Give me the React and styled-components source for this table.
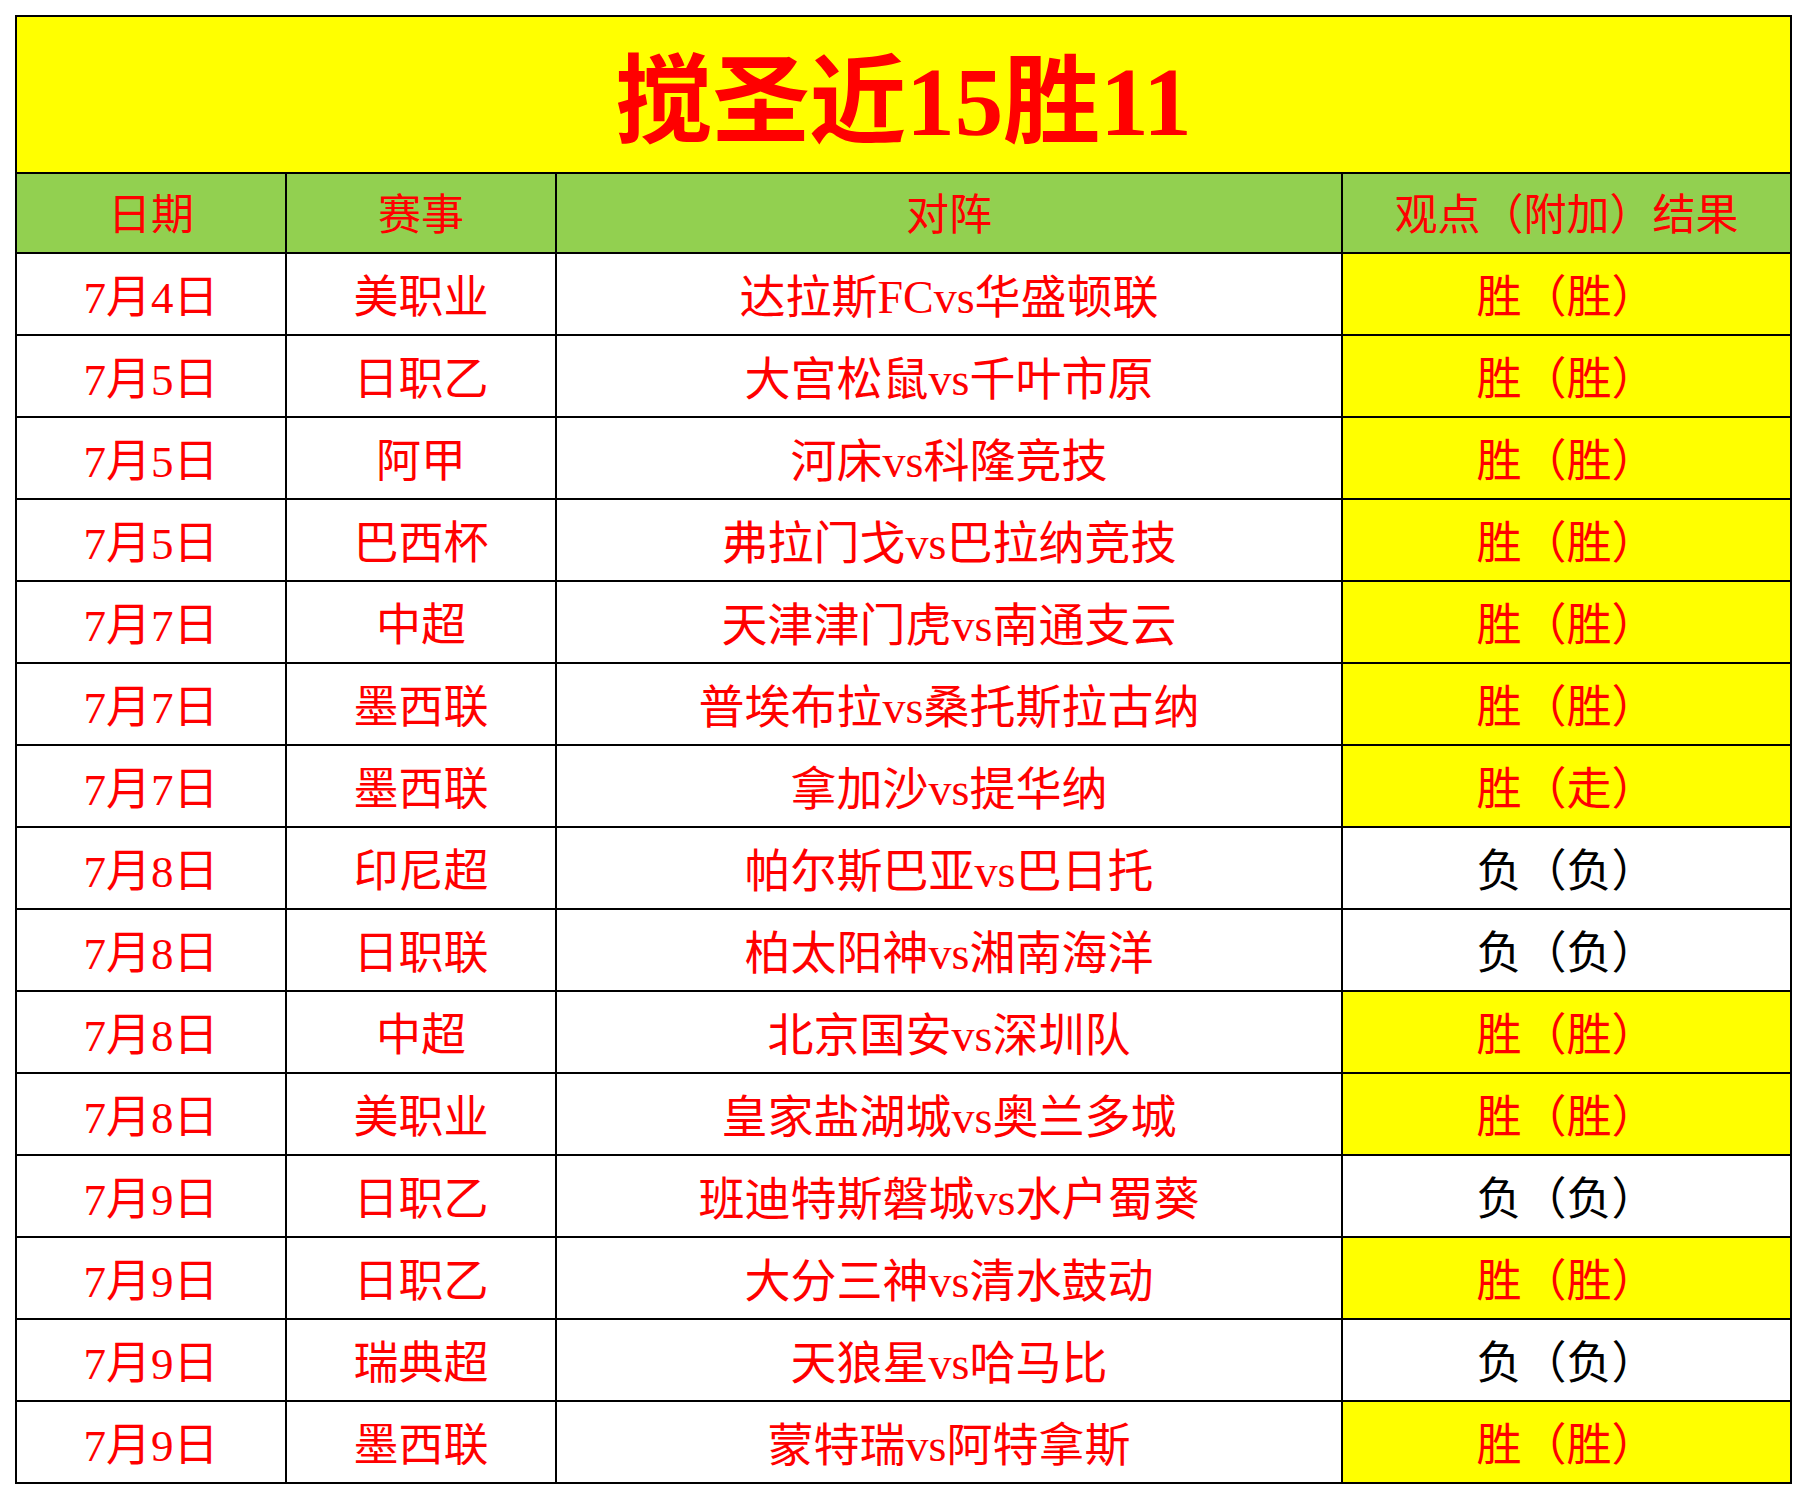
import React from 'react';
import styled, { createGlobalStyle } from 'styled-components';

const GlobalStyle = createGlobalStyle`
    html, body {
        margin: 0;
        padding: 0;
        background: #ffffff;
    }
    body {
        font-family: "Liberation Serif", "Noto Sans CJK SC", serif;
    }
`

const Page = styled.div`
    padding: 15px 0 0 15px;
`

const Table = styled.table`
    width: 1775px;
    table-layout: fixed;
    border-collapse: collapse;
    border: 2px solid #000;

    td {
        border: 2px solid #000;
        text-align: center;
        vertical-align: middle;
        padding: 0;
        line-height: 1.1;
    }
`

const TitleCell = styled.td`
    height: 139px;
    background: #ffff00;
    color: #ff0000;
    font-size: 97px;
    font-weight: bold;
    padding-top: 16px !important;
    line-height: 1 !important;
`

const HeadCell = styled.td`
    height: 72px;
    background: #92d050;
    color: #ff0000;
    font-size: 43px;
    padding-top: 6px !important;
`

const Cell = styled.td`
    height: 71px;
    background: ${p => (p.$hl ? '#ffff00' : '#ffffff')};
    color: ${p => (p.$dark ? '#000000' : '#ff0000')};
    font-size: ${p => (p.$wide ? '46px' : '45px')};
    padding-top: 9px !important;
    white-space: nowrap;
`

const rows = [
    ['7月4日', '美职业', '达拉斯FCvs华盛顿联', '胜（胜）'],
    ['7月5日', '日职乙', '大宫松鼠vs千叶市原', '胜（胜）'],
    ['7月5日', '阿甲', '河床vs科隆竞技', '胜（胜）'],
    ['7月5日', '巴西杯', '弗拉门戈vs巴拉纳竞技', '胜（胜）'],
    ['7月7日', '中超', '天津津门虎vs南通支云', '胜（胜）'],
    ['7月7日', '墨西联', '普埃布拉vs桑托斯拉古纳', '胜（胜）'],
    ['7月7日', '墨西联', '拿加沙vs提华纳', '胜（走）'],
    ['7月8日', '印尼超', '帕尔斯巴亚vs巴日托', '负（负）'],
    ['7月8日', '日职联', '柏太阳神vs湘南海洋', '负（负）'],
    ['7月8日', '中超', '北京国安vs深圳队', '胜（胜）'],
    ['7月8日', '美职业', '皇家盐湖城vs奥兰多城', '胜（胜）'],
    ['7月9日', '日职乙', '班迪特斯磐城vs水户蜀葵', '负（负）'],
    ['7月9日', '日职乙', '大分三神vs清水鼓动', '胜（胜）'],
    ['7月9日', '瑞典超', '天狼星vs哈马比', '负（负）'],
    ['7月9日', '墨西联', '蒙特瑞vs阿特拿斯', '胜（胜）'],
]

function App() {
    return (
        <Page>
            <GlobalStyle />
            <Table>
                <colgroup>
                    <col style={{ width: 270 }} />
                    <col style={{ width: 270 }} />
                    <col style={{ width: 786 }} />
                    <col style={{ width: 449 }} />
                </colgroup>
                <tbody>
                    <tr>
                        <TitleCell colSpan={4}>搅圣近15胜11</TitleCell>
                    </tr>
                    <tr>
                        <HeadCell>日期</HeadCell>
                        <HeadCell>赛事</HeadCell>
                        <HeadCell>对阵</HeadCell>
                        <HeadCell>观点（附加）结果</HeadCell>
                    </tr>
                    {rows.map((r, i) => {
                        const lose = r[3].startsWith('负')
                        return (
                            <tr key={i}>
                                <Cell>{r[0]}</Cell>
                                <Cell>{r[1]}</Cell>
                                <Cell $wide>{r[2]}</Cell>
                                <Cell $hl={!lose} $dark={lose}>{r[3]}</Cell>
                            </tr>
                        )
                    })}
                </tbody>
            </Table>
        </Page>
    )
}

export default App
